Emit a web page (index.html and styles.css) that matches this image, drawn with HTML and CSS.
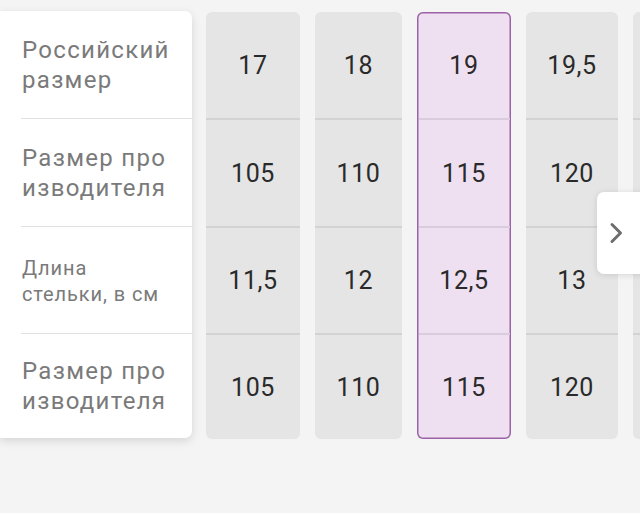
FILE: index.html
```html
<!DOCTYPE html>
<html lang="ru">
<head>
<meta charset="utf-8">
<link rel="stylesheet" href="styles.css">
</head>
<body>
<div class="table">
  <div class="labels">
    <div class="label"><span>Российский<br>размер</span></div>
    <div class="label"><span>Размер про<br>изводителя</span></div>
    <div class="label small"><span>Длина<br>стельки, в см</span></div>
    <div class="label"><span>Размер про<br>изводителя</span></div>
  </div>
  <div class="cols">
    <div class="col"><div class="cell">17</div><div class="cell">105</div><div class="cell">11,5</div><div class="cell">105</div></div>
    <div class="col"><div class="cell">18</div><div class="cell">110</div><div class="cell">12</div><div class="cell">110</div></div>
    <div class="col selected"><div class="cell">19</div><div class="cell">115</div><div class="cell">12,5</div><div class="cell">115</div></div>
    <div class="col"><div class="cell">19,5</div><div class="cell">120</div><div class="cell">13</div><div class="cell">120</div></div>
    <div class="col"><div class="cell"></div><div class="cell"></div><div class="cell"></div><div class="cell"></div></div>
  </div>
  <div class="next">
    <svg width="16" height="24" viewBox="0 0 16 24"><path d="M4 3.5 L12.5 12 L4 20.5" fill="none" stroke="#6e6e6e" stroke-width="3" stroke-linecap="round" stroke-linejoin="round"/></svg>
  </div>
</div>
</body>
</html>
```
FILE: styles.css
```css
html, body {
  margin: 0;
  padding: 0;
  background: #f4f4f4;
  width: 640px;
  height: 513px;
  overflow: hidden;
  font-family: Roboto, "Noto Sans", sans-serif;
}
.table {
  position: relative;
  display: flex;
  align-items: flex-start;
  padding-top: 11px;
  gap: 14px;
}
.labels {
  flex: 0 0 192px;
  background: #fff;
  border-radius: 0 7px 7px 0;
  box-shadow: 0 3px 10px rgba(0, 0, 0, 0.13);
  display: grid;
  grid-template-rows: 107px 108px 107px 105px;
}
.label {
  display: flex;
  align-items: center;
  margin-left: 21px;
  padding-left: 1px;
  color: #7a7a7a;
  font-size: 24px;
  line-height: 30px;
  letter-spacing: 1.3px;
}
.label + .label {
  border-top: 1px solid #e2e2e2;
}
.label.small {
  font-size: 20px;
  line-height: 26px;
  letter-spacing: 0.9px;
  padding-top: 2px;
}
.cols {
  display: flex;
  gap: 15px;
  flex: 1;
  overflow: hidden;
  padding-top: 1px;
}
.col {
  flex: 0 0 94px;
  background: #e5e5e5;
  border-radius: 6px;
  display: grid;
  grid-template-rows: 106px 108px 107px 106px;
}
.col:nth-child(2) { flex-basis: 87px; }
.col:nth-child(4) { flex-basis: 92px; }
.cell {
  display: flex;
  align-items: center;
  justify-content: center;
  color: #2a2a2a;
  font-size: 25px;
  letter-spacing: 0.6px;
}
.cell + .cell {
  border-top: 2px solid #d3d3d3;
}
.col.selected {
  background: #eee0f0;
  box-shadow: inset 0 0 0 1.5px #9b62a7;
}
.col.selected .cell + .cell {
  border-top: 2px solid #dacbdd;
  margin: 0 1.5px;
}
.next {
  position: absolute;
  left: 597px;
  top: 192px;
  width: 56px;
  height: 82px;
  background: #fff;
  border-radius: 7px;
  box-shadow: 0 1px 6px rgba(0, 0, 0, 0.12);
  display: flex;
  align-items: center;
  padding-left: 11px;
  box-sizing: border-box;
}
```
